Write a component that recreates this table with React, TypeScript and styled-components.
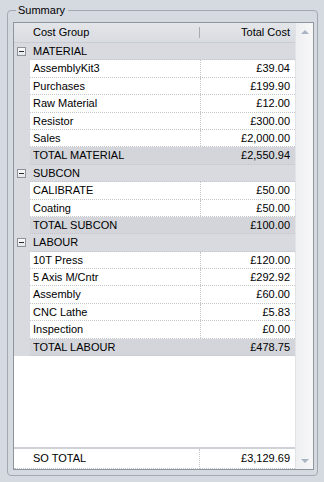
import React from 'react';
import styled, { createGlobalStyle } from 'styled-components';

const GlobalStyle = createGlobalStyle`
  html, body {
    margin: 0;
    padding: 0;
    height: 100%;
    overflow: hidden;
    background: #d5d9e0;
    font-family: "Liberation Sans", Arial, sans-serif;
    font-size: 11px;
    color: #000;
  }
`;

const Page = styled.div`
  display: flex;
  flex-direction: column;
`;

const GroupBox = styled.fieldset`
  margin: 3px 6px 0 7px;
  padding: 5px 3px 5px 5px;
  border: 1px solid #a4a9b1;
  border-radius: 4px;
  min-width: 0;
`;

const Legend = styled.legend`
  margin-left: 3px;
  padding: 0 3px 0 2px;
  font-size: 11px;
  line-height: 14px;
`;

const Grid = styled.div`
  display: flex;
  height: 448px;
  box-sizing: border-box;
  border: 1px solid #8f959e;
  background: #fff;
`;

const Main = styled.div`
  flex: 1;
  display: flex;
  flex-direction: column;
  min-width: 0;
`;

const Header = styled.div`
  display: flex;
  flex: 0 0 19px;
  box-sizing: border-box;
  border-bottom: 1px solid #c9ccd2;
  background: linear-gradient(#e3e5e9, #d9dce1);
  align-items: center;
`;

const HeaderCell = styled.div<{ $right?: boolean }>`
  position: relative;
  box-sizing: border-box;
  flex: ${({ $right }) => ($right ? '1' : '0 0 186px')};
  padding: ${({ $right }) => ($right ? '0 5px 0 0' : '0 0 0 19px')};
  text-align: ${({ $right }) => ($right ? 'right' : 'left')};
  line-height: 19px;

  ${({ $right }) =>
    !$right &&
    `
    &::after {
      content: '';
      position: absolute;
      right: 0;
      top: 4px;
      height: 11px;
      border-left: 1px solid #a6abb3;
    }
  `}
`;

const Rows = styled.div`
  display: flex;
  flex-direction: column;
`;

const Row = styled.div`
  display: flex;
  height: 17.4px;
  flex: 0 0 17.4px;
`;

const Indent = styled.div`
  flex: 0 0 16px;
  background: #d8dadf;
  display: flex;
  align-items: center;
  padding-left: 3px;
  box-sizing: border-box;
`;

const Body = styled.div<{ $tone: 'item' | 'total' | 'group' }>`
  flex: 1;
  display: flex;
  box-sizing: border-box;
  border-bottom: 1px dotted #c4c6ca;
  background: ${({ $tone }) =>
    $tone === 'item' ? '#fff' : $tone === 'total' ? '#d3d5da' : '#d8dadf'};
`;

const NameCell = styled.div<{ $divided?: boolean }>`
  box-sizing: border-box;
  flex: ${({ $divided }) => ($divided ? '0 0 171px' : '1')};
  padding-left: 3px;
  line-height: 17px;
  white-space: nowrap;
  border-right: ${({ $divided }) => ($divided ? '1px dotted #c4c6ca' : 'none')};
`;

const ValueCell = styled.div`
  flex: 1;
  padding-right: 5px;
  text-align: right;
  line-height: 17px;
  white-space: nowrap;
`;

const Expander = styled.span`
  position: relative;
  width: 9px;
  height: 9px;
  box-sizing: border-box;
  border: 1px solid #8d929a;
  background: linear-gradient(#fbfbfc, #e4e6ea);

  &::after {
    content: '';
    position: absolute;
    left: 1px;
    top: 3px;
    width: 5px;
    height: 1px;
    background: #2b2b2b;
  }
`;

const Filler = styled.div`
  flex: 1;
  background: #fff;
`;

const Footer = styled.div`
  display: flex;
  flex: 0 0 22px;
  box-sizing: border-box;
  border-top: 2px solid #cfd2d7;
  background: #fff;
`;

const FooterName = styled.div`
  flex: 0 0 186px;
  box-sizing: border-box;
  padding-left: 19px;
  line-height: 19px;
  border-right: 1px dotted #c4c6ca;
  border-bottom: 1px dotted #c4c6ca;
`;

const FooterValue = styled.div`
  flex: 1;
  padding-right: 5px;
  text-align: right;
  line-height: 19px;
  border-bottom: 1px dotted #c4c6ca;
`;

const ScrollBar = styled.div`
  flex: 0 0 18px;
  display: flex;
  flex-direction: column;
  justify-content: space-between;
  background: linear-gradient(90deg, #eeeff1, #f7f7f8);
  border-left: 1px solid #e1e3e7;
  box-sizing: border-box;
`;

const ArrowButton = styled.div<{ $down?: boolean }>`
  height: 17px;
  display: flex;
  align-items: center;
  justify-content: center;

  &::before {
    content: '';
    border-left: 4px solid transparent;
    border-right: 4px solid transparent;
    ${({ $down }) =>
      $down ? 'border-top: 4px solid #a9b3c3;' : 'border-bottom: 4px solid #a9b3c3;'}
  }
`;

const TabEdge = styled.div`
  margin: 6px 0 0 2px;
  width: 85px;
  height: 12px;
  border-top: 1px solid #8f959e;
  background: #dde0e6;
`;

interface CostLine {
  name: string;
  cost: string;
}

interface CostGroup {
  name: string;
  lines: CostLine[];
  total: string;
}

const groups: CostGroup[] = [
  {
    name: 'MATERIAL',
    lines: [
      { name: 'AssemblyKit3', cost: '£39.04' },
      { name: 'Purchases', cost: '£199.90' },
      { name: 'Raw Material', cost: '£12.00' },
      { name: 'Resistor', cost: '£300.00' },
      { name: 'Sales', cost: '£2,000.00' },
    ],
    total: '£2,550.94',
  },
  {
    name: 'SUBCON',
    lines: [
      { name: 'CALIBRATE', cost: '£50.00' },
      { name: 'Coating', cost: '£50.00' },
    ],
    total: '£100.00',
  },
  {
    name: 'LABOUR',
    lines: [
      { name: '10T Press', cost: '£120.00' },
      { name: '5 Axis M/Cntr', cost: '£292.92' },
      { name: 'Assembly', cost: '£60.00' },
      { name: 'CNC Lathe', cost: '£5.83' },
      { name: 'Inspection', cost: '£0.00' },
    ],
    total: '£478.75',
  },
];

const CostGroupRows: React.FC<{ group: CostGroup }> = ({ group }) => (
  <>
    <Row>
      <Indent>
        <Expander />
      </Indent>
      <Body $tone="group">
        <NameCell>{group.name}</NameCell>
      </Body>
    </Row>
    {group.lines.map((line) => (
      <Row key={line.name}>
        <Indent />
        <Body $tone="item">
          <NameCell $divided>{line.name}</NameCell>
          <ValueCell>{line.cost}</ValueCell>
        </Body>
      </Row>
    ))}
    <Row>
      <Indent />
      <Body $tone="total">
        <NameCell>TOTAL {group.name}</NameCell>
        <ValueCell>{group.total}</ValueCell>
      </Body>
    </Row>
  </>
);

const App: React.FC = () => (
  <Page>
    <GlobalStyle />
    <GroupBox>
      <Legend>Summary</Legend>
      <Grid>
        <Main>
          <Header>
            <HeaderCell>Cost Group</HeaderCell>
            <HeaderCell $right>Total Cost</HeaderCell>
          </Header>
          <Rows>
            {groups.map((g) => (
              <CostGroupRows key={g.name} group={g} />
            ))}
          </Rows>
          <Filler />
          <Footer>
            <FooterName>SO TOTAL</FooterName>
            <FooterValue>£3,129.69</FooterValue>
          </Footer>
        </Main>
        <ScrollBar>
          <ArrowButton />
          <ArrowButton $down />
        </ScrollBar>
      </Grid>
    </GroupBox>
    <TabEdge />
  </Page>
);

export default App;
